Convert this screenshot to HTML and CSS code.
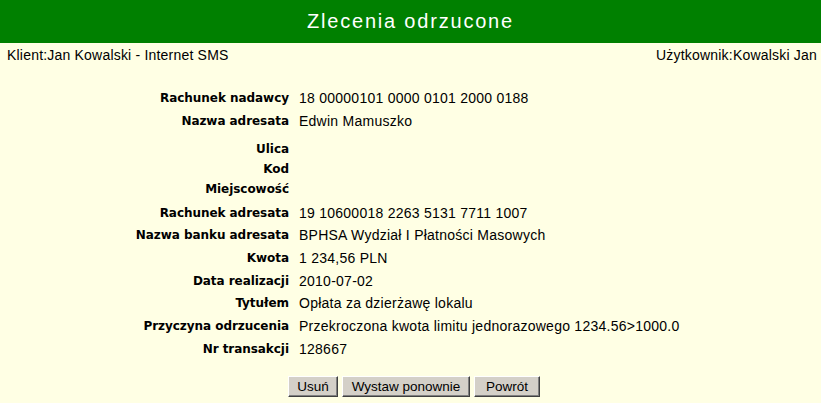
FILE: index.html
```html
<!DOCTYPE html>
<html lang="pl">
<head>
<meta charset="utf-8">
<title>Zlecenia odrzucone</title>
<link rel="stylesheet" href="styles.css">
</head>
<body>
<header class="title-bar">Zlecenia odrzucone</header>
<div class="info-bar">
  <span>Klient:Jan Kowalski - Internet SMS</span>
  <span>Użytkownik:Kowalski Jan</span>
</div>
<div class="details">
  <div class="row"><span class="label">Rachunek nadawcy</span><span class="value">18 00000101 0000 0101 2000 0188</span></div>
  <div class="row row-gap"><span class="label">Nazwa adresata</span><span class="value">Edwin Mamuszko</span></div>
  <div class="row empty"><span class="label">Ulica</span><span class="value"></span></div>
  <div class="row empty"><span class="label">Kod</span><span class="value"></span></div>
  <div class="row empty empty-last"><span class="label">Miejscowość</span><span class="value"></span></div>
  <div class="row"><span class="label">Rachunek adresata</span><span class="value">19 10600018 2263 5131 7711 1007</span></div>
  <div class="row"><span class="label">Nazwa banku adresata</span><span class="value">BPHSA Wydział I Płatności Masowych</span></div>
  <div class="row"><span class="label">Kwota</span><span class="value">1 234,56 PLN</span></div>
  <div class="row"><span class="label">Data realizacji</span><span class="value">2010-07-02</span></div>
  <div class="row"><span class="label">Tytułem</span><span class="value">Opłata za dzierżawę lokalu</span></div>
  <div class="row"><span class="label">Przyczyna odrzucenia</span><span class="value">Przekroczona kwota limitu jednorazowego 1234.56&gt;1000.0</span></div>
  <div class="row"><span class="label">Nr transakcji</span><span class="value">128667</span></div>
</div>
<div class="actions">
  <button class="btn btn-usun">Usuń</button>
  <button class="btn btn-wystaw">Wystaw ponownie</button>
  <button class="btn btn-powrot">Powrót</button>
</div>
</body>
</html>
```
FILE: styles.css
```css
html, body {
  margin: 0;
  padding: 0;
  background: #ffffe4;
  font-family: "Liberation Sans", Arial, sans-serif;
  color: #000;
  width: 821px;
  height: 403px;
  overflow: hidden;
}
.title-bar {
  height: 43px;
  background: #008000;
  color: #fff;
  font-size: 20px;
  letter-spacing: 1.8px;
  display: flex;
  align-items: center;
  justify-content: center;
}
.info-bar {
  display: flex;
  justify-content: space-between;
  padding: 0 4px 0 7px;
  height: 24px;
  align-items: center;
  font-size: 14px;
  letter-spacing: 0.2px;
}
.details {
  margin-top: 19.35px;
  display: grid;
  grid-template-columns: 289px 1fr;
}
.row {
  display: contents;
}
.label, .value {
  height: 22.7px;
  display: flex;
  align-items: center;
  box-sizing: border-box;
  white-space: nowrap;
}
.label {
  justify-content: flex-end;
  font-family: "DejaVu Sans", sans-serif;
  font-weight: bold;
  font-size: 12px;
  letter-spacing: -0.05px;
}
.value {
  padding-left: 10px;
  font-size: 14px;
  letter-spacing: 0.25px;
}
.empty .label, .empty .value {
  height: 20px;
}
.empty-last .label, .empty-last .value {
  height: 22px;
  padding-bottom: 2px;
}
.row-gap .label, .row-gap .value {
  height: 30.25px;
  padding-bottom: 6.35px;
}
.actions {
  display: flex;
  justify-content: center;
  gap: 4px;
  margin-top: 15.75px;
  padding-left: 7px;
}
.btn {
  height: 21px;
  background: #d4d0c8;
  font-family: "Liberation Sans", Arial, sans-serif;
  font-size: 13.5px;
  color: #000;
  border: 1px solid;
  border-color: #fff #404040 #404040 #fff;
  box-shadow: inset -1px -1px 0 #808080;
  padding: 0;
  white-space: nowrap;
}
.btn-usun { width: 50px; }
.btn-wystaw { width: 128px; }
.btn-powrot { width: 66px; }
```
